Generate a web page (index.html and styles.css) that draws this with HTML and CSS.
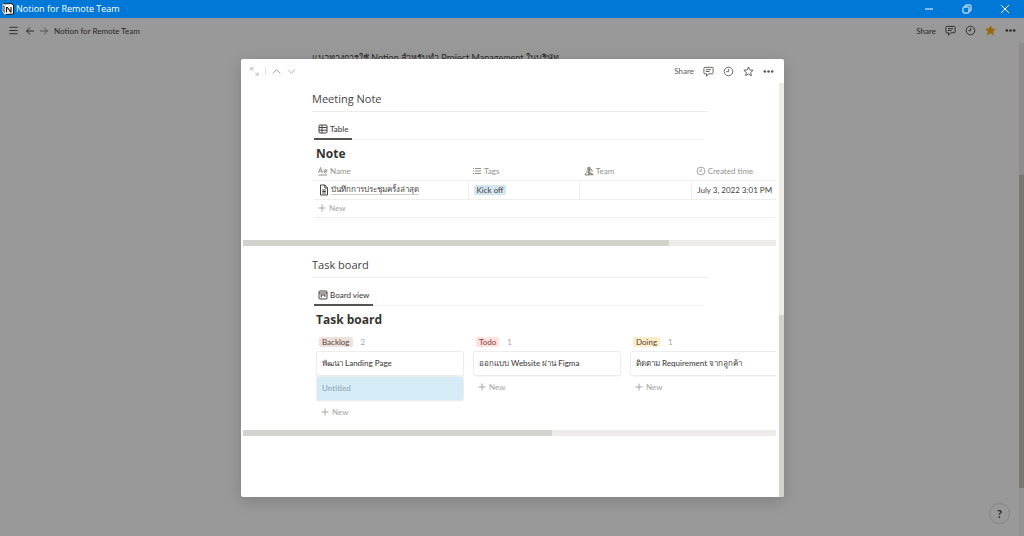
FILE: index.html
```html
<!DOCTYPE html>
<html lang="en">
<head>
<meta charset="utf-8">
<title>Notion for Remote Team</title>
<link rel="stylesheet" href="styles.css">
</head>
<body>
<svg class="defs" aria-hidden="true">
  <symbol id="comment" viewBox="0 0 12 12"><path d="M2 1.500h8q1 0 1 1v5q0 1-1 1H6.500L3.800 11V8.500H2q-1 0-1-1v-5q0-1 1-1zM3.200 4h5.600M3.200 6h4"/></symbol>
  <symbol id="clock" viewBox="0 0 12 12"><circle cx="6" cy="6" r="4.700"/><path d="M6.200 3.200v3H3.700"/></symbol>
  <symbol id="star" viewBox="0 0 12 12"><path d="M6 1l1.450 3.300 3.600.35-2.700 2.400.8 3.550L6 8.750 2.850 10.600l.8-3.550-2.700-2.400 3.600-.35z"/></symbol>
  <symbol id="dots" viewBox="0 0 12 12"><g fill="currentColor" stroke="none"><circle cx="2" cy="6" r="1.400"/><circle cx="6" cy="6" r="1.400"/><circle cx="10" cy="6" r="1.400"/></g></symbol>
  <symbol id="plus" viewBox="0 0 10 10"><path d="M5 1.500v7M1.500 5h7"/></symbol>
</svg>

<header class="titlebar">
  <svg class="logo" viewBox="0 0 12 12"><path d="M1 1l8-.5L11.500 2v9L3 11.500 1 9z" fill="#fff" stroke="#151515"/><path d="M1 1l2 1.500v9L1 9z" fill="#151515"/><path d="M4.500 9.500v-5h1l3 4.500h.5V4" fill="none" stroke="#151515" stroke-width="1.200"/></svg>
  <span class="window-name">Notion for Remote Team</span>
  <button class="win" aria-label="Minimize"><svg viewBox="0 0 12 12"><path d="M2 6h8"/></svg></button>
  <button class="win" aria-label="Restore"><svg viewBox="0 0 12 12"><rect x="2" y="4" width="6" height="6" rx="1"/><path d="M4 4V3q0-1 1-1h4q1 0 1 1v4q0 1-1 1H8"/></svg></button>
  <button class="win" aria-label="Close"><svg viewBox="0 0 12 12"><path d="M2 2l8 8M10 2l-8 8"/></svg></button>
</header>

<div class="workspace">
  <div class="page">
    <nav class="topbar">
      <button class="tool menu" aria-label="Menu"><svg viewBox="0 0 12 12"><path d="M1.500 2.500h9M1.500 6h9M1.500 9.500h9"/></svg></button>
      <button class="tool arrow" aria-label="Back"><svg viewBox="0 0 10 10"><path d="M9 5H1.500M5 1.500L1.500 5 5 8.500"/></svg></button>
      <button class="tool arrow dim" aria-label="Forward"><svg viewBox="0 0 10 10"><path d="M1 5h7.500M5 1.500L8.500 5 5 8.500"/></svg></button>
      <a class="crumb" href="#">Notion for Remote Team</a>
      <div class="actions">
        <button class="tool">Share</button>
        <button class="tool" aria-label="Comments"><svg><use href="#comment"/></svg></button>
        <button class="tool" aria-label="Updates"><svg><use href="#clock"/></svg></button>
        <button class="tool favorite" aria-label="Favorite"><svg><use href="#star"/></svg></button>
        <button class="tool" aria-label="More"><svg><use href="#dots"/></svg></button>
      </div>
    </nav>
    <p class="intro">แนวทางการใช้ Notion สำหรับทำ Project Management ในบริษัท</p>
    <div class="page-scroll"></div>
    <button class="help" aria-label="Help">?</button>
  </div>

  <div class="overlay">
    <main class="modal" role="dialog" aria-label="Notion page preview">
      <div class="modal-bar">
        <button class="tool faint" aria-label="Open as page"><svg viewBox="0 0 12 12"><path d="M2 5V2h3M2 2l3 3M10 7v3H7M10 10L7 7"/></svg></button>
        <span class="divider"></span>
        <button class="tool soft" aria-label="Previous"><svg viewBox="0 0 12 12"><path d="M2 8l4-4 4 4"/></svg></button>
        <button class="tool faint next" aria-label="Next"><svg viewBox="0 0 12 12"><path d="M2 4l4 4 4-4"/></svg></button>
        <div class="actions">
          <button class="tool">Share</button>
          <button class="tool" aria-label="Comments"><svg><use href="#comment"/></svg></button>
          <button class="tool" aria-label="Updates"><svg><use href="#clock"/></svg></button>
          <button class="tool" aria-label="Favorite"><svg><use href="#star"/></svg></button>
          <button class="tool" aria-label="More"><svg><use href="#dots"/></svg></button>
        </div>
      </div>

      <div class="modal-body">
        <div class="content">
          <section class="block">
            <h2>Meeting Note</h2>
            <div class="tabs"><button class="tab"><svg viewBox="0 0 10 10"><rect x="1" y="1" width="8" height="8" rx="1"/><path d="M1 3.500h8M1 6.200h8M4 1v8"/></svg>Table</button></div>
            <h3>Note</h3>
            <div class="clip">
              <table class="notes">
                <colgroup><col class="wide"><col><col><col></colgroup>
                <thead>
                  <tr>
                    <th scope="col"><span class="cell"><svg viewBox="0 0 10 10"><path d="M.5 7L2.500 1.500l2 5.500M1.200 5h2.600M6 5.300h3a1.500 1.700 0 1 0-.5 1.300M.5 9h8.500"/></svg>Name</span></th>
                    <th scope="col"><span class="cell"><svg viewBox="0 0 10 10"><path d="M1 2.500h1M1 5h1M1 7.500h1M3 2.500h6M3 5h6M3 7.500h6"/></svg>Tags</span></th>
                    <th scope="col"><span class="cell"><svg viewBox="0 0 10 10"><g fill="currentColor" stroke="none"><ellipse cx="5" cy="3" rx="1.900" ry="2.300"/><path d="M4 5h2l.5 1.500L9.500 8v1.300H3.500z"/></g><path d="M3 4.500v2L1 8v1h4M7 3l1 1v2"/></svg>Team</span></th>
                    <th scope="col"><span class="cell"><svg viewBox="0 0 12 12"><use href="#clock" width="12" height="12"/></svg>Created time</span></th>
                  </tr>
                </thead>
                <tbody>
                  <tr>
                    <td><span class="cell"><svg class="doc" viewBox="0 0 10 12"><path d="M1.500 1h4.500l2.500 2.800V11h-7zM5.800 1v3h2.700M3.200 6h3.600M3.200 7.500h3.600M3.200 9h3.600"/></svg><a href="#" class="record">บันทึกการประชุมครั้งล่าสุด</a></span></td>
                    <td><span class="tag blue">Kick off</span></td>
                    <td></td>
                    <td>July 3, 2022 3:01 PM</td>
                  </tr>
                </tbody>
              </table>
              <button class="new row-new"><svg><use href="#plus"/></svg>New</button>
            </div>
            <div class="hscroll"><div class="thumb"></div></div>
          </section>

          <section class="block">
            <h2>Task board</h2>
            <div class="tabs"><button class="tab"><svg viewBox="0 0 10 10"><rect x="1" y="1" width="8" height="8" rx="1"/><path d="M1 3h8M3.200 4v3.500M5 4v2M6.900 4v2.800" stroke-width="1.100"/></svg>Board view</button></div>
            <h3>Task board</h3>
            <div class="clip board">
              <div class="lane">
                <div class="lane-head"><span class="tag brown">Backlog</span><span>2</span></div>
                <article class="card">พัฒนา Landing Page</article>
                <article class="card empty">Untitled</article>
                <button class="new"><svg><use href="#plus"/></svg>New</button>
              </div>
              <div class="lane">
                <div class="lane-head"><span class="tag red">Todo</span><span>1</span></div>
                <article class="card">ออกแบบ Website ผ่าน Figma</article>
                <button class="new"><svg><use href="#plus"/></svg>New</button>
              </div>
              <div class="lane">
                <div class="lane-head"><span class="tag yellow">Doing</span><span>1</span></div>
                <article class="card">ติดตาม Requirement จากลูกค้า</article>
                <button class="new"><svg><use href="#plus"/></svg>New</button>
              </div>
            </div>
            <div class="hscroll"><div class="thumb short"></div></div>
          </section>
        </div>
        <div class="vscroll"></div>
      </div>
    </main>
  </div>
</div>
</body>
</html>
```
FILE: styles.css
```css
* { box-sizing: border-box; }

body {
  margin: 0;
  height: 100vh;
  display: flex;
  flex-direction: column;
  overflow: hidden;
  font: 8px/12px Lato, "Noto Sans", sans-serif;
  color: #45433e;
  background: #fff;
}

button {
  font: inherit;
  color: inherit;
  background: none;
  border: 0;
  padding: 0;
}

a { color: inherit; text-decoration: none; }

svg {
  display: block;
  flex: none;
  width: 11px;
  height: 11px;
  fill: none;
  stroke: currentColor;
}

.defs { position: absolute; width: 0; height: 0; }

.titlebar {
  display: flex;
  align-items: center;
  flex: none;
  height: 18px;
  padding: 0 13px 0 2px;
  background: #0078d7;
  color: #fff;
  font-family: "Open Sans", "Noto Sans", sans-serif;
  font-size: 9px;
}

.logo { width: 12px; height: 12px; }
.window-name { margin: 0 auto 0 2px; }
.win { margin-left: 26px; }
.win svg { width: 12px; height: 12px; }

.workspace { position: relative; flex: 1; }
.page { height: 100%; }

.topbar {
  display: flex;
  align-items: center;
  height: 25px;
  padding: 0 8px;
}

.tool { display: flex; align-items: center; }
.menu { margin-right: 6px; }
.arrow { margin-right: 4px; }
.arrow svg { width: 10px; height: 10px; }
.dim { opacity: 0.6; }
.crumb { margin-left: 1px; }

.actions { display: flex; align-items: center; gap: 9px; margin-left: auto; }
.favorite { color: #ffb110; }
.favorite svg { fill: currentColor; }

.intro { margin: 9px 0 0 312px; font-size: 9px; }

.page-scroll {
  position: absolute;
  right: 0;
  top: 25px;
  bottom: 0;
  width: 5px;
  background: linear-gradient(#edece9 132px, #c8c7c0 132px 445px, #f3f3f1 445px);
}

.help {
  position: absolute;
  right: 14px;
  bottom: 12px;
  width: 21px;
  height: 21px;
  border: 1px solid #dcdcdc;
  border-radius: 50%;
  font-size: 11px;
  font-weight: 700;
}

.overlay {
  position: absolute;
  inset: 0;
  display: flex;
  padding: 41px 240px 39px 241px;
  background: rgba(0, 0, 0, 0.4);
}

.modal {
  display: flex;
  flex: 1;
  min-width: 0;
  flex-direction: column;
  overflow: hidden;
  border-radius: 2px;
  background: #fff;
  box-shadow: 0 4px 16px rgba(0, 0, 0, 0.16);
}

.modal-bar {
  display: flex;
  align-items: center;
  height: 24px;
  flex: none;
  padding: 0 10px 0 8px;
  color: #5a5853;
}

.divider { width: 1px; height: 8px; margin: 0 5px; background: #e0e0de; }
.soft { color: #8f8e8a; }
.faint { color: #b9b8b4; }
.next { margin-left: 4px; }

.modal-body { display: flex; flex: 1; min-height: 0; }

.content { flex: 1; min-width: 0; padding: 0 3px 0 2px; overflow: hidden; }

.vscroll {
  width: 5px;
  flex: none;
  background: linear-gradient(#edece9 56%, #d3d3cd 56%);
}

.block { margin-bottom: 3px; }

h2, h3 { font-family: "Open Sans", "Noto Sans", sans-serif; }

h2 {
  margin: 0 68px 0 69px;
  padding: 6px 0 3px;
  border-bottom: 1px solid #ececea;
  font-size: 11px;
  line-height: 19px;
  font-weight: 500;
}

.tabs {
  display: flex;
  margin: 7px 72px 0 71px;
  border-bottom: 1px solid #f0f0ee;
}

.tab {
  display: flex;
  align-items: center;
  gap: 2px;
  margin-bottom: -1px;
  padding: 4px 4px 3px;
  border-bottom: 2px solid #55534e;
  font-weight: 500;
}

.tab svg, .cell svg, .new svg { width: 10px; height: 10px; }

h3 {
  margin: 5px 0 0 73px;
  font-size: 12px;
  line-height: 18px;
  font-weight: 700;
  color: #37352f;
}

.clip { margin-left: 71px; overflow: hidden; }

.notes {
  width: 490px;
  table-layout: fixed;
  border-collapse: collapse;
}

.wide { width: 154px; }

.notes th {
  height: 17px;
  padding: 0 4px;
  font-weight: 400;
  text-align: left;
  color: #91908b;
}

.notes td {
  height: 19px;
  padding: 0 5px;
  border: solid #eeeeec;
  border-width: 1px 1px 1px 0;
  white-space: nowrap;
}

.cell { display: flex; align-items: center; gap: 2px; }
.cell .doc { height: 12px; }
.record { border-bottom: 1px solid #d0cfcc; line-height: 10px; }

.tag {
  display: inline-block;
  padding: 0 3px;
  border-radius: 2px;
  line-height: 10px;
}

.blue { background: #d3e5ef; }
.brown { background: #eee0da; }
.red { background: #ffe2dd; }
.yellow { background: #fdecc8; }

.new {
  display: flex;
  align-items: center;
  gap: 2px;
  padding: 4px 3px;
  color: #a5a4a0;
}

.row-new {
  width: 100%;
  height: 18px;
  margin-bottom: 22px;
  border-bottom: 1px solid #eeeeec;
}

.hscroll { height: 6px; background: #edece9; }
.thumb { width: 80%; height: 100%; background: #d3d3cd; }
.short { width: 58%; }

.board { display: flex; gap: 11px; padding: 7px 0 8px 3px; }

.lane { flex: none; width: 146px; }

.lane-head {
  display: flex;
  gap: 8px;
  align-items: center;
  padding-left: 2px;
  margin-bottom: 4px;
  color: #a5a4a0;
}

.lane-head .tag { color: #55463f; }
.lane-head .red { color: #7e403a; }

.card {
  height: 23px;
  margin-bottom: 2px;
  padding: 0 5px;
  border-radius: 2px;
  line-height: 23px;
  font-weight: 500;
  background: #fff;
  box-shadow: 0 0 0 1px #ededeb, 0 1px 2px rgba(15, 15, 15, 0.14);
}

.empty { background: #d5ecf7; color: #8fa7b1; }
```
